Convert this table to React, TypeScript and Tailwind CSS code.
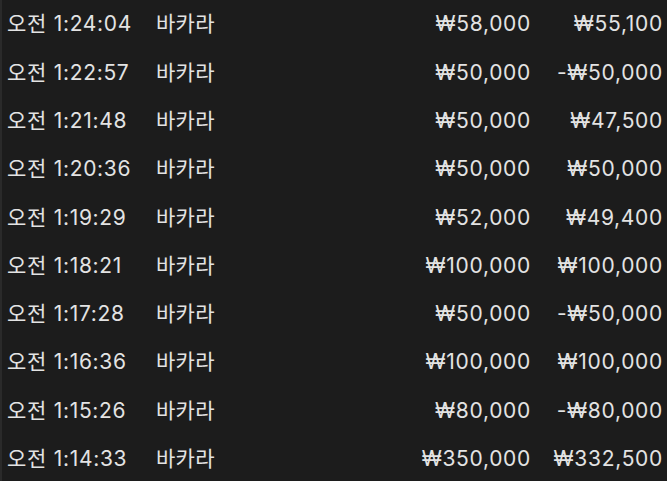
const rows: [string, string, string][] = [
  ["오전 1:24:04", "₩58,000", "₩55,100"],
  ["오전 1:22:57", "₩50,000", "-₩50,000"],
  ["오전 1:21:48", "₩50,000", "₩47,500"],
  ["오전 1:20:36", "₩50,000", "₩50,000"],
  ["오전 1:19:29", "₩52,000", "₩49,400"],
  ["오전 1:18:21", "₩100,000", "₩100,000"],
  ["오전 1:17:28", "₩50,000", "-₩50,000"],
  ["오전 1:16:36", "₩100,000", "₩100,000"],
  ["오전 1:15:26", "₩80,000", "-₩80,000"],
  ["오전 1:14:33", "₩350,000", "₩332,500"],
];

export default function App() {
  return (
    <div
      className="w-[667px] h-[481px] overflow-hidden bg-[#1c1c1c] border-l-[2px] border-[#2a2a2a] text-[#e3e3e3] text-[21px] tracking-[0.7px]"
      style={{ fontFamily: 'Inter, "Noto Sans CJK KR", sans-serif' }}
    >
      {rows.map((r, i) => (
        <div key={i} className="flex items-center h-[48.3px]">
          <div className="w-[154px] pl-[5px] whitespace-nowrap">{r[0]}</div>
          <div className="w-[100px] whitespace-nowrap tracking-[0.3px]">바카라</div>
          <div className="w-[275px] text-right whitespace-nowrap">{r[1]}</div>
          <div className="w-[132px] text-right whitespace-nowrap">{r[2]}</div>
        </div>
      ))}
    </div>
  );
}
